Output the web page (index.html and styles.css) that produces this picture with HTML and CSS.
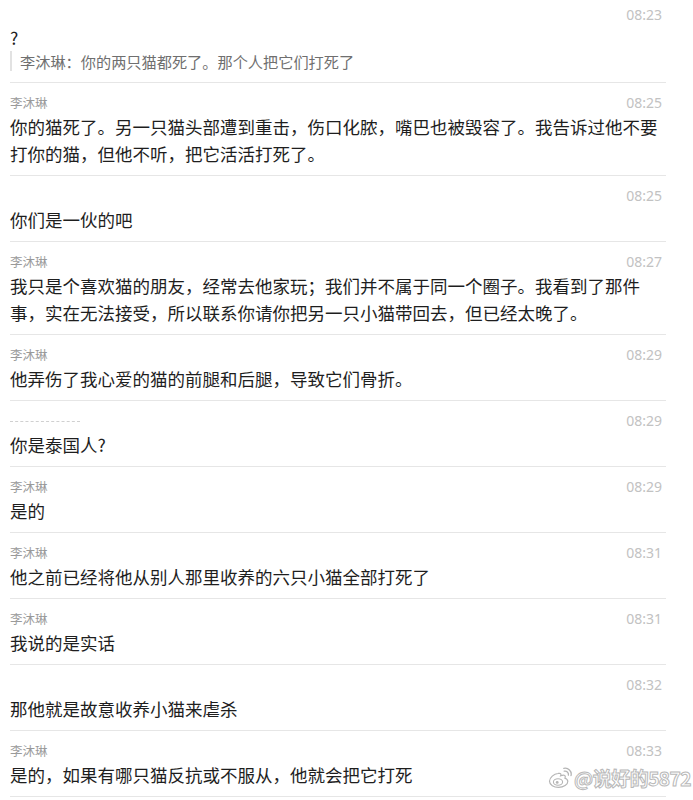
FILE: index.html
```html
<!DOCTYPE html>
<html lang="zh-CN">
<head>
<meta charset="utf-8">
<title>聊天记录</title>
<link rel="stylesheet" href="styles.css">
</head>
<body>
<div class="page">
  <div class="list">
    <div class="row first">
      <div class="head"><span class="name"></span><span class="time">08:23</span></div>
      <div class="msg">?</div>
      <div class="quote">李沐琳：你的两只猫都死了。那个人把它们打死了</div>
    </div>
    <div class="row">
      <div class="head"><span class="name">李沐琳</span><span class="time">08:25</span></div>
      <div class="msg">你的猫死了。另一只猫头部遭到重击，伤口化脓，嘴巴也被毁容了。我告诉过他不要打你的猫，但他不听，把它活活打死了。</div>
    </div>
    <div class="row">
      <div class="head"><span class="name"></span><span class="time">08:25</span></div>
      <div class="msg">你们是一伙的吧</div>
    </div>
    <div class="row">
      <div class="head"><span class="name">李沐琳</span><span class="time">08:27</span></div>
      <div class="msg">我只是个喜欢猫的朋友，经常去他家玩；我们并不属于同一个圈子。我看到了那件事，实在无法接受，所以联系你请你把另一只小猫带回去，但已经太晚了。</div>
    </div>
    <div class="row">
      <div class="head"><span class="name">李沐琳</span><span class="time">08:29</span></div>
      <div class="msg">他弄伤了我心爱的猫的前腿和后腿，导致它们骨折。</div>
    </div>
    <div class="row">
      <div class="head"><span class="name blurred"></span><span class="time">08:29</span></div>
      <div class="msg">你是泰国人?</div>
    </div>
    <div class="row">
      <div class="head"><span class="name">李沐琳</span><span class="time">08:29</span></div>
      <div class="msg">是的</div>
    </div>
    <div class="row">
      <div class="head"><span class="name">李沐琳</span><span class="time">08:31</span></div>
      <div class="msg">他之前已经将他从别人那里收养的六只小猫全部打死了</div>
    </div>
    <div class="row">
      <div class="head"><span class="name">李沐琳</span><span class="time">08:31</span></div>
      <div class="msg">我说的是实话</div>
    </div>
    <div class="row">
      <div class="head"><span class="name"></span><span class="time">08:32</span></div>
      <div class="msg">那他就是故意收养小猫来虐杀</div>
    </div>
    <div class="row">
      <div class="head"><span class="name">李沐琳</span><span class="time">08:33</span></div>
      <div class="msg">是的，如果有哪只猫反抗或不服从，他就会把它打死</div>
    </div>
  </div>
  <div class="watermark">
    <svg class="wb" width="24" height="22" viewBox="0 0 24 22" aria-hidden="true">
      <path d="M10 6.5c-4 .3-8.5 4-8.5 7.8 0 3.6 4.4 6 9 6 5.3 0 9.3-2.9 9.3-5.9 0-1.8-1.6-2.8-2.9-3.2.6-1.4.5-2.6-.7-3-1.3-.4-3.5.6-3.5.6s.6-1.6-.2-2.2C12 6.2 11 6.4 10 6.5z" fill="#fff" stroke="#b5b5b5" stroke-width="1.2"/>
      <ellipse cx="10" cy="15" rx="4.6" ry="3.3" fill="#fff" stroke="#b5b5b5" stroke-width="1.1"/>
      <circle cx="9.2" cy="15.4" r="1.4" fill="#b5b5b5"/>
      <path d="M16.2 4.2c2.4-.6 4.7 1.4 4.2 3.9" fill="none" stroke="#b5b5b5" stroke-width="1.3" stroke-linecap="round"/>
      <path d="M15.8 1.4c4.3-1 8.4 2.8 7.2 7.2" fill="none" stroke="#b5b5b5" stroke-width="1.3" stroke-linecap="round"/>
    </svg>
    <span class="wm-text">@说好的5872</span>
  </div>
</div>
</body>
</html>
```

FILE: styles.css
```css
html, body {
  margin: 0;
  padding: 0;
  background: #ffffff;
}

.page {
  position: relative;
  width: 693px;
  height: 800px;
  overflow: hidden;
  font-family: "Noto Sans CJK SC", "Noto Sans", sans-serif;
}

.list {
  width: 656px;
  margin-left: 10px;
  display: flex;
  flex-direction: column;
}

.row {
  padding: 10px 0 8px;
  border-bottom: 1px solid #e6e6e6;
}

.row.first {
  padding: 5px 0 11px;
}

.head {
  display: flex;
  justify-content: space-between;
  align-items: center;
  height: 20px;
}

.name {
  font-size: 12.5px;
  color: #9a9a9a;
  line-height: 20px;
}

.name.blurred {
  width: 70px;
  height: 3px;
  margin-top: 4px;
  border-top: 1px dashed #d0d0d0;
  filter: blur(0.6px);
}

.time {
  font-family: "Noto Sans", "Liberation Sans", sans-serif;
  font-size: 14px;
  color: #c2c2c2;
  line-height: 20px;
  margin-right: 4px;
}

.msg {
  font-size: 17.5px;
  line-height: 27px;
  color: #1e1e1e;
}

.first .msg {
  line-height: 26px;
}

.quote {
  padding-left: 8px;
  border-left: 2px solid #e2e2e2;
  font-size: 15.2px;
  line-height: 20px;
  color: #6f6f6f;
}

.watermark {
  position: absolute;
  right: 2px;
  top: 766px;
  display: flex;
  align-items: center;
  gap: 2px;
}

.wm-text {
  font-family: "Noto Sans CJK SC", "Noto Sans", sans-serif;
  font-size: 19px;
  line-height: 24px;
  color: #ffffff;
  font-weight: 700;
  -webkit-text-stroke: 1px #b8b8b8;
  letter-spacing: -0.5px;
}
```
